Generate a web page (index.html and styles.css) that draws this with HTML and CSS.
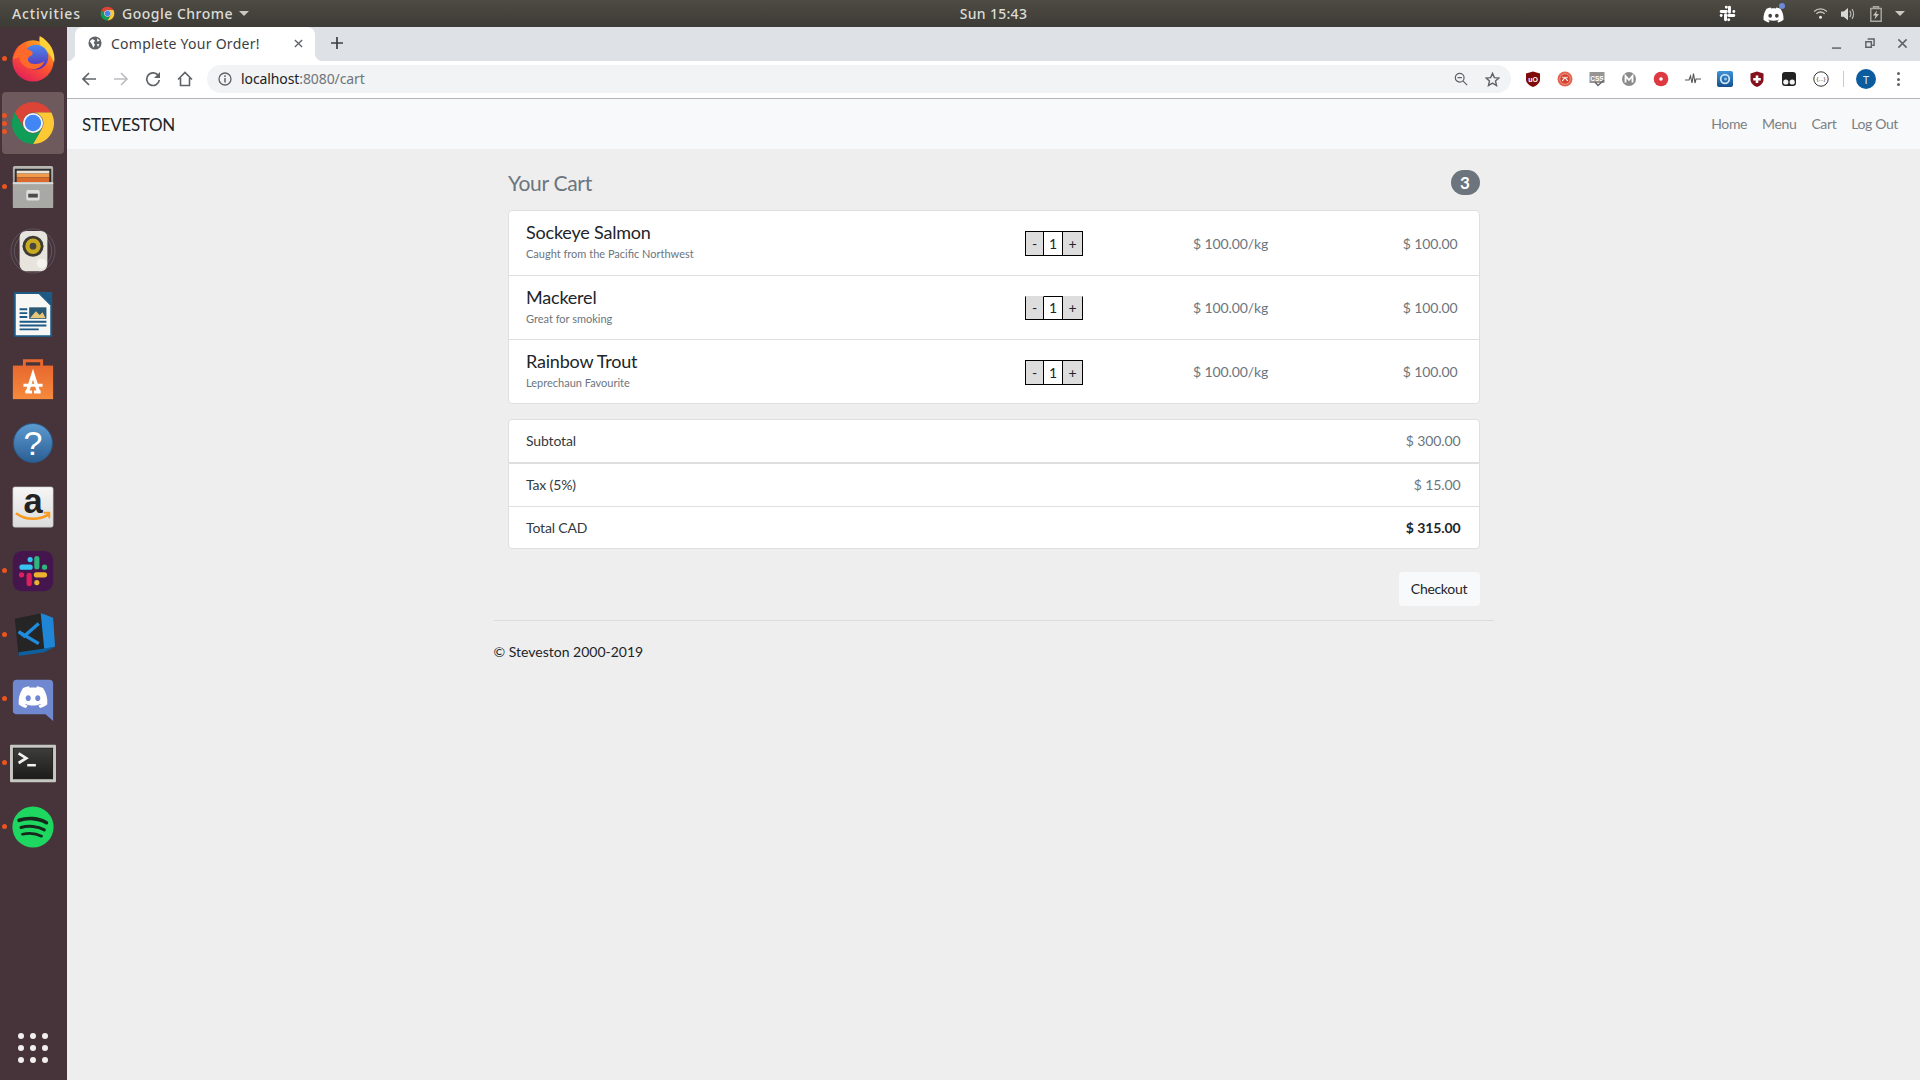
FILE: index.html
```html
<!DOCTYPE html>
<html lang="en">
<head>
<meta charset="utf-8">
<title>Complete Your Order!</title>
<link rel="stylesheet" href="styles.css">
</head>
<body>
<svg class="defs" width="0" height="0" aria-hidden="true">
  <defs>
    <symbol id="chrome" viewBox="0 0 48 48">
      <path fill="#db4437" d="M5 13A22 22 0 0 1 43 13H24A11 11 0 0 0 14.5 29.5Z"/>
      <path fill="#fcc934" d="M43 13A22 22 0 0 1 24 46L33.5 29.5A11 11 0 0 0 24 13Z"/>
      <path fill="#0f9d58" d="M24 46A22 22 0 0 1 5 13L14.5 29.5A11 11 0 0 0 33.5 29.5Z"/>
      <circle cx="24" cy="24" r="10.5" fill="#f1f3f4"/>
      <circle cx="24" cy="24" r="8.5" fill="#4285f4"/>
    </symbol>
    <symbol id="discord" viewBox="0 0 24 24">
      <path fill="currentColor" d="M20.317 4.3698a19.7913 19.7913 0 00-4.8851-1.5152.0741.0741 0 00-.0785.0371c-.211.3753-.4447.8648-.6083 1.2495-1.8447-.2762-3.68-.2762-5.4868 0-.1636-.3933-.4058-.8742-.6177-1.2495a.077.077 0 00-.0785-.037 19.7363 19.7363 0 00-4.8852 1.515.0699.0699 0 00-.0321.0277C.5334 9.0458-.319 13.5799.0992 18.0578a.0824.0824 0 00.0312.0561c2.0528 1.5076 4.0413 2.4228 5.9929 3.0294a.0777.0777 0 00.0842-.0276c.4616-.6304.8731-1.2952 1.226-1.9942a.076.076 0 00-.0416-.1057c-.6528-.2476-1.2743-.5495-1.8722-.8923a.077.077 0 01-.0076-.1277c.1258-.0943.2517-.1923.3718-.2914a.0743.0743 0 01.0776-.0105c3.9278 1.7933 8.18 1.7933 12.0614 0a.0739.0739 0 01.0785.0095c.1202.099.246.1981.3728.2924a.077.077 0 01-.0066.1276 12.2986 12.2986 0 01-1.873.8914.0766.0766 0 00-.0407.1067c.3604.698.7719 1.3628 1.225 1.9932a.076.076 0 00.0842.0286c1.961-.6067 3.9495-1.5219 6.0023-3.0294a.077.077 0 00.0313-.0552c.5004-5.177-.8382-9.6739-3.5485-13.6604a.061.061 0 00-.0312-.0286zM8.02 15.3312c-1.1825 0-2.1569-1.0857-2.1569-2.419 0-1.3332.9555-2.4189 2.157-2.4189 1.2108 0 2.1757 1.0952 2.1568 2.419 0 1.3332-.9555 2.4189-2.1569 2.4189zm7.9748 0c-1.1825 0-2.1569-1.0857-2.1569-2.419 0-1.3332.9554-2.4189 2.1569-2.4189 1.2108 0 2.1757 1.0952 2.1568 2.419 0 1.3332-.946 2.4189-2.1568 2.4189Z"/>
    </symbol>
    <linearGradient id="ffBody" x1="0.8" y1="0" x2="0.2" y2="1">
      <stop offset="0" stop-color="#ffb21c"/><stop offset="0.45" stop-color="#ff5a2c"/><stop offset="1" stop-color="#e01a5f"/>
    </linearGradient>
    <linearGradient id="ffCore" x1="0.5" y1="0" x2="0.5" y2="1">
      <stop offset="0" stop-color="#4a8af0"/><stop offset="1" stop-color="#5a2db0"/>
    </linearGradient>
    <linearGradient id="metal" x1="0" y1="0" x2="0" y2="1">
      <stop offset="0" stop-color="#b9b9b6"/><stop offset="1" stop-color="#777773"/>
    </linearGradient>
    <linearGradient id="storeBag" x1="0.5" y1="0" x2="0.5" y2="1">
      <stop offset="0" stop-color="#e8682f"/><stop offset="1" stop-color="#f58a3c"/>
    </linearGradient>
    <linearGradient id="amazonTile" x1="0.5" y1="0" x2="0.5" y2="1">
      <stop offset="0" stop-color="#f6f6f6"/><stop offset="1" stop-color="#dcdcdc"/>
    </linearGradient>
    <linearGradient id="extBlue" x1="0.5" y1="0" x2="0.5" y2="1">
      <stop offset="0" stop-color="#3d93d8"/><stop offset="1" stop-color="#14508c"/>
    </linearGradient>
    <linearGradient id="termScreen" x1="0.5" y1="0" x2="0.5" y2="1">
      <stop offset="0" stop-color="#3d3d3b"/><stop offset="1" stop-color="#1c1c1b"/>
    </linearGradient>
  </defs>
</svg>

<header class="topbar">
  <div class="topbar-left">
    <span class="activities">Activities</span>
    <span class="app-menu">
      <svg class="app-menu-icon"><use href="#chrome"/></svg>
      <span>Google Chrome</span>
      <span class="caret"></span>
    </span>
  </div>
  <div class="clock">Sun 15:43</div>
  <div class="tray">
    <svg class="tray-slack" viewBox="0 0 48 48" fill="none" stroke="#fff" stroke-width="7.5" stroke-linecap="round">
      <path d="M8 19H21M21 8V8.1M29 8V21M40 19V19.1M27 29H40M27 40V40.1M19 27V40M8 29V29.1"/>
    </svg>
    <span class="tray-discord">
      <svg class="tray-discord-icon"><use href="#discord"/></svg>
      <span class="tray-dot"></span>
    </span>
    <svg class="tray-wifi" viewBox="0 0 20 16" fill="none" stroke="#c8c8c4" stroke-width="1.7">
      <path d="M1.5 5.2C6.5 .8 13.5 .8 18.5 5.2M4.5 8.2C7.8 5.6 12.2 5.6 15.5 8.2"/>
      <circle cx="10" cy="13" r="2" fill="#e6e6e2" stroke="none"/>
    </svg>
    <svg class="tray-volume" viewBox="0 0 18 16" fill="none" stroke="#bdbdb8" stroke-width="1.3">
      <path fill="#d8d8d4" stroke="none" d="M1 5H4L9 1V15L4 11H1Z"/>
      <path d="M11 4.5C12.5 6.5 12.5 9.5 11 11.5M13.5 2.5C16 5.5 16 10.5 13.5 13.5"/>
    </svg>
    <svg class="tray-battery" viewBox="0 0 12 16">
      <path fill="none" stroke="#a9a9a4" stroke-width="1.4" d="M.8 2.5H11.2V15.2H.8ZM3.5 2.5V.8H8.5V2.5"/>
      <path fill="#c8c8c4" d="M7 4.5L3 9.5H5.5L4.5 13.5L9 8H6.3Z"/>
    </svg>
    <span class="caret tray-caret"></span>
  </div>
</header>

<div class="desktop">
  <nav class="dock">
    <div class="dock-item"><span class="run-dot"></span>
      <svg class="dock-icon" viewBox="0 0 48 48">
        <circle cx="24" cy="26" r="21.5" fill="url(#ffBody)"/>
        <path fill="#ffd23a" d="M31 0C42 6 48 17 46 28C43 20 38 15 33 12C31 9 30 4 31 0Z"/>
        <circle cx="27" cy="22" r="13" fill="url(#ffCore)"/>
        <path fill="#ff6a2a" d="M3 24C5 16 11 9 18 6C15 11 17 14 21 15C24 16 25 19 21 21C17 23 18 28 24 29C29 30 33 28 36 26C33 35 22 37 15 31C12 29 10 26 10 22C7 23 5 24 3 24Z"/>
      </svg>
    </div>
    <div class="dock-item dock-item-active">
      <span class="run-dots"><span class="run-dot-inline"></span><span class="run-dot-inline"></span><span class="run-dot-inline"></span></span>
      <svg class="dock-icon"><use href="#chrome"/></svg>
    </div>
    <div class="dock-item"><span class="run-dot"></span>
      <svg class="dock-icon" viewBox="0 0 48 48">
        <rect x="3" y="2" width="42" height="44" rx="2" fill="url(#metal)"/>
        <rect x="5" y="5" width="38" height="15" fill="#2f2f2e"/>
        <rect x="7" y="7" width="34" height="3" fill="#e8e4da"/>
        <rect x="7" y="10" width="34" height="4" fill="#f09a4a"/>
        <rect x="7" y="14" width="34" height="5" fill="#d96a2c"/>
        <rect x="3" y="19" width="42" height="27" rx="1" fill="#a8a8a5"/>
        <rect x="3" y="19" width="42" height="2" fill="#dcdcd9"/>
        <rect x="17" y="27" width="14" height="11" rx="2" fill="#dededb"/>
        <rect x="19" y="31" width="10" height="4" fill="#4c4c4a"/>
      </svg>
    </div>
    <div class="dock-item">
      <svg class="dock-icon" viewBox="0 0 48 48">
        <circle cx="24" cy="24" r="23" fill="none" stroke="#6f6a78" stroke-width="1" opacity=".6"/>
        <circle cx="24" cy="24" r="19.5" fill="none" stroke="#6f6a78" stroke-width="1" opacity=".7"/>
        <rect x="10" y="3" width="29" height="42" rx="7" fill="#e6e4dc"/>
        <circle cx="24" cy="19" r="11" fill="#3d3a33"/>
        <circle cx="24" cy="19" r="8" fill="#c9a91f"/>
        <circle cx="24" cy="19" r="3.5" fill="#4a4640"/>
        <circle cx="33" cy="37" r="5" fill="#f4f3ef"/>
      </svg>
    </div>
    <div class="dock-item">
      <svg class="dock-icon" viewBox="0 0 48 48">
        <path fill="#1d5a85" d="M4 0H33L44 11V45A2 2 0 0 1 42 47H6A2 2 0 0 1 4 45Z"/>
        <path fill="#f7f7f5" d="M6 2H30L42 14V45H6Z"/>
        <path fill="#1d5a85" d="M33 0H44V11Z"/>
        <path fill="#1d5a85" d="M10 17H18V19H10ZM10 21H18V23H10ZM10 25H18V27H10ZM10 30H38V32H10ZM10 34H38V36H10ZM10 38H30V40H10Z"/>
        <rect x="20" y="16" width="18" height="12" fill="#2a5a75"/>
        <path fill="#e6c777" d="M21 27L27 20L31 24L34 21L37 27Z"/>
      </svg>
    </div>
    <div class="dock-item">
      <svg class="dock-icon" viewBox="0 0 48 48">
        <path fill="none" stroke="#e8682f" stroke-width="3" d="M15 12V5H33V12"/>
        <rect x="3" y="10" width="42" height="35" fill="url(#storeBag)"/>
        <path fill="none" stroke="#fff" stroke-width="3.5" d="M18 38L24 19L30 38"/>
        <path fill="#fff" d="M14 29H34V32H14ZM16 36H23V39H16ZM25 36H32V39H25Z"/>
      </svg>
    </div>
    <div class="dock-item">
      <span class="help-ball">?</span>
    </div>
    <div class="dock-item">
      <svg class="dock-icon" viewBox="0 0 48 48">
        <rect x="3" y="3" width="42" height="42" rx="2" fill="url(#amazonTile)" stroke="#bbb" stroke-width=".6"/>
        <text class="amazon-mark" x="24" y="30" text-anchor="middle">a</text>
        <path fill="none" stroke="#f79a1e" stroke-width="2.6" stroke-linecap="round" d="M7 31C17 38 30 38 40 32"/>
        <path fill="none" stroke="#f79a1e" stroke-width="2" stroke-linecap="round" d="M36 30H41V35"/>
      </svg>
    </div>
    <div class="dock-item"><span class="run-dot"></span>
      <svg class="dock-icon" viewBox="0 0 48 48">
        <rect x="3" y="3" width="42" height="42" rx="9" fill="#45164e"/>
        <g fill="none" stroke-width="5.4" stroke-linecap="round">
          <path stroke="#36c5f0" d="M12.5 20H21M21 12V12.1"/>
          <path stroke="#2eb67d" d="M28 11V19.5M36 20H36.1"/>
          <path stroke="#ecb22e" d="M27.5 28H36M28 36V36.1"/>
          <path stroke="#e01e5a" d="M20 28.5V37M12 28H12.1"/>
        </g>
      </svg>
    </div>
    <div class="dock-item"><span class="run-dot"></span>
      <svg class="dock-icon" viewBox="0 0 48 48">
        <path fill="#252525" d="M5 7L34 1L39 40L9 46Z"/>
        <path fill="#1f86d6" d="M32 1L45 6L47 36L36 41Z"/>
        <path fill="#0e5f9e" d="M9 42L36 38L47 36L36 42L9 46Z"/>
        <path fill="none" stroke="#1e8bdc" stroke-width="3.6" d="M30 12L15 25L9 20.5L30 33"/>
      </svg>
    </div>
    <div class="dock-item"><span class="run-dot"></span>
      <svg class="dock-icon" viewBox="0 0 48 48">
        <path fill="#7088d0" d="M7 4H41A4 4 0 0 1 45 8V47L37 40H7A4 4 0 0 1 3 36V8A4 4 0 0 1 7 4Z"/>
        <svg class="dock-discord-glyph" x="8" y="7" width="32" height="30"><use href="#discord"/></svg>
      </svg>
    </div>
    <div class="dock-item"><span class="run-dot"></span>
      <svg class="dock-icon" viewBox="0 0 48 48">
        <rect x="0" y="5" width="48" height="39" rx="1" fill="#c6c6c3"/>
        <rect x="3.5" y="8.5" width="41" height="32" fill="url(#termScreen)" stroke="#111" stroke-width=".8"/>
        <path fill="none" stroke="#f2f2f2" stroke-width="2.8" d="M9 14L17 19L9 24"/>
        <rect x="18" y="25" width="9" height="2.6" fill="#f2f2f2"/>
      </svg>
    </div>
    <div class="dock-item"><span class="run-dot"></span>
      <svg class="dock-icon" viewBox="0 0 48 48">
        <circle cx="24" cy="24" r="21.5" fill="#1ed760"/>
        <path fill="none" stroke="#17271c" stroke-linecap="round" stroke-width="3.8" d="M9.5 17C18 14 30 14.5 38 19.5"/>
        <path fill="none" stroke="#17271c" stroke-linecap="round" stroke-width="3.2" d="M11.5 24.5C19 22.3 29 23 35.8 27"/>
        <path fill="none" stroke="#17271c" stroke-linecap="round" stroke-width="2.8" d="M13 31.5C20 30 27 30.5 33 33.6"/>
      </svg>
    </div>
    <div class="dock-item dock-apps">
      <span class="apps-grid">
        <i></i><i></i><i></i><i></i><i></i><i></i><i></i><i></i><i></i>
      </span>
    </div>
  </nav>

  <div class="browser">
    <div class="tabstrip">
      <div class="tab">
        <svg class="tab-globe" viewBox="0 0 16 16">
          <circle cx="8" cy="8" r="7.5" fill="#5f6368"/>
          <path fill="#fff" d="M2 6L5 3.5L8 5L6.5 8L8 10L6 13.5L4.5 9.5ZM10.5 2.5L13.5 5L10.5 6.5ZM10 9.5L13 9L11.5 12.5Z"/>
        </svg>
        <span class="tab-title">Complete Your Order!</span>
        <svg class="tab-close" viewBox="0 0 10 10" fill="none" stroke="#5f6368" stroke-width="1.5"><path d="M1 1L9 9M9 1L1 9"/></svg>
      </div>
      <svg class="new-tab" viewBox="0 0 12 12" fill="none" stroke="#3c4043" stroke-width="1.7"><path d="M6 0V12M0 6H12"/></svg>
      <div class="win-controls">
        <svg viewBox="0 0 12 12" fill="none" stroke="#5f6368" stroke-width="1.6"><path d="M1 11H11"/></svg>
        <svg viewBox="0 0 12 12" fill="none" stroke="#5f6368" stroke-width="1.6"><path d="M4 1H11V8H9M2 4H8V10H2Z"/></svg>
        <svg viewBox="0 0 12 12" fill="none" stroke="#5f6368" stroke-width="1.6"><path d="M1.5 1.5L10.5 10.5M10.5 1.5L1.5 10.5"/></svg>
      </div>
    </div>

    <div class="toolbar">
      <span class="tool-btn"><svg viewBox="0 0 16 16" fill="none" stroke="#5f6368" stroke-width="1.7"><path d="M15 8H2M8 2L2 8L8 14"/></svg></span>
      <span class="tool-btn"><svg viewBox="0 0 16 16" fill="none" stroke="#bcbec1" stroke-width="1.7"><path d="M1 8H14M8 2L14 8L8 14"/></svg></span>
      <span class="tool-btn"><svg viewBox="0 0 16 16" fill="none" stroke="#5f6368" stroke-width="1.7"><path d="M13.5 5A6.3 6.3 0 1 0 14.3 9"/><path fill="#5f6368" stroke="none" d="M15 1V7H9Z"/></svg></span>
      <span class="tool-btn"><svg viewBox="0 0 16 16" fill="none" stroke="#5f6368" stroke-width="1.6"><path d="M1 8.5L8 1.5L15 8.5M3.5 7V14.5H12.5V7"/></svg></span>
      <div class="omnibox">
        <svg class="omni-info" viewBox="0 0 14 14" fill="none" stroke="#5f6368" stroke-width="1.3">
          <circle cx="7" cy="7" r="6"/><path d="M7 6V10.5" stroke-width="1.5"/><path d="M7 3.3V5" stroke-width="1.5"/>
        </svg>
        <span class="omni-url"><span class="omni-host">localhost</span>:8080/cart</span>
        <svg class="omni-zoom" viewBox="0 0 16 16" fill="none" stroke="#5f6368" stroke-width="1.4"><circle cx="6.5" cy="6.5" r="5"/><path d="M10.2 10.2L15 15M4 6.5H9"/></svg>
        <svg class="omni-star" viewBox="0 0 16 16" fill="none" stroke="#5f6368" stroke-width="1.5"><path d="M8 1.5L10 6L14.8 6.4L11.2 9.6L12.3 14.4L8 11.8L3.7 14.4L4.8 9.6L1.2 6.4L6 6Z"/></svg>
      </div>
      <div class="extensions">
        <span class="ext"><svg viewBox="0 0 16 16"><path fill="#7f0a0a" d="M8 .5L15 2.5V9C15 12 11 15 8 16C5 15 1 12 1 9V2.5Z"/><text class="ext-label" x="8" y="10.5" text-anchor="middle">uO</text></svg></span>
        <span class="ext"><svg viewBox="0 0 16 16"><circle cx="8" cy="8" r="7.5" fill="#e2634f"/><circle cx="8" cy="8" r="5.2" fill="#d2422f" stroke="#f3b0a2" stroke-width=".7"/><path fill="none" stroke="#fff" stroke-width="1.2" d="M5.3 10L8 6.5L10.7 10M5.5 5.8L6.5 6.8M10.5 5.8L9.5 6.8"/></svg></span>
        <span class="ext"><svg viewBox="0 0 16 16"><rect x=".5" y="1" width="15" height="11" fill="#959595"/><text class="ext-label ext-css" x="8" y="9.5" text-anchor="middle">CSS</text><path fill="none" stroke="#666" stroke-width="1.5" d="M6 11L9 14.5L15 9"/></svg></span>
        <span class="ext"><svg viewBox="0 0 16 16"><circle cx="8" cy="8" r="7" fill="#8b8b8b"/><path fill="none" stroke="#fff" stroke-width="1.8" d="M4.5 11.5V5L8 9L11.5 5V11.5"/></svg></span>
        <span class="ext"><svg viewBox="0 0 16 16"><circle cx="8" cy="8" r="7.3" fill="#dc3a40"/><circle cx="8" cy="8" r="1.8" fill="#fff"/></svg></span>
        <span class="ext"><svg viewBox="0 0 16 16" fill="none" stroke="#555" stroke-width="1.1"><path d="M0 9H4L5.5 5L7 12L8.5 2.5L10 12L11 8H16"/></svg></span>
        <span class="ext"><svg viewBox="0 0 16 16"><rect width="16" height="16" rx="2" fill="url(#extBlue)"/><circle cx="8" cy="8" r="4.3" fill="none" stroke="#cfe3f5" stroke-width="1.8"/><circle cx="8.5" cy="8" r="1.5" fill="#8fc2ea"/></svg></span>
        <span class="ext"><svg viewBox="0 0 16 16"><path fill="#860f1c" d="M8 .5L14.5 2.5V9C14.5 12 11 15 8 16C5 15 1.5 12 1.5 9V2.5Z"/><path fill="#fff" d="M6.7 4.5H9.3V7H11.8V9.5H9.3V12H6.7V9.5H4.2V7H6.7Z"/></svg></span>
        <span class="ext"><svg viewBox="0 0 16 16"><rect x="1" y="1" width="14" height="14" rx="3" fill="#222"/><circle cx="4.8" cy="11" r="2.6" fill="#f4f4f4"/><circle cx="11.2" cy="11" r="2.6" fill="#f4f4f4"/></svg></span>
        <span class="ext"><svg viewBox="0 0 16 16"><circle cx="8" cy="8" r="7.2" fill="none" stroke="#333" stroke-width="1"/><text class="ext-label ext-braces" x="8" y="10.2" text-anchor="middle">{...}</text></svg></span>
      </div>
      <span class="tool-sep"></span>
      <span class="tool-btn"><span class="avatar">T</span></span>
      <span class="tool-btn"><span class="kebab"><i></i><i></i><i></i></span></span>
    </div>

    <div class="navbar">
      <a class="brand">STEVESTON</a>
      <ul class="nav-links">
        <li>Home</li>
        <li>Menu</li>
        <li>Cart</li>
        <li>Log Out</li>
      </ul>
    </div>

    <main class="page">
      <div class="container">
        <div class="content">
          <div class="cart-head">
            <h1 class="cart-title">Your Cart</h1>
            <span class="badge">3</span>
          </div>

          <section class="card">
            <div class="item">
              <div class="item-info">
                <div class="item-name">Sockeye Salmon</div>
                <div class="item-desc">Caught from the Pacific Northwest</div>
              </div>
              <div class="qty">
                <span class="qty-btn qty-minus">-</span><span class="qty-val">1</span><span class="qty-btn qty-plus">+</span>
              </div>
              <div class="item-price">$ 100.00/kg</div>
              <div class="item-total">$ 100.00</div>
            </div>
            <div class="item">
              <div class="item-info">
                <div class="item-name">Mackerel</div>
                <div class="item-desc">Great for smoking</div>
              </div>
              <div class="qty qty-open">
                <span class="qty-btn qty-minus">-</span><span class="qty-val">1</span><span class="qty-btn qty-plus">+</span>
              </div>
              <div class="item-price">$ 100.00/kg</div>
              <div class="item-total">$ 100.00</div>
            </div>
            <div class="item">
              <div class="item-info">
                <div class="item-name">Rainbow Trout</div>
                <div class="item-desc">Leprechaun Favourite</div>
              </div>
              <div class="qty">
                <span class="qty-btn qty-minus">-</span><span class="qty-val">1</span><span class="qty-btn qty-plus">+</span>
              </div>
              <div class="item-price">$ 100.00/kg</div>
              <div class="item-total">$ 100.00</div>
            </div>
          </section>

          <section class="card summary">
            <div class="sum-row sum-first"><span class="sum-label">Subtotal</span><span class="sum-value">$ 300.00</span></div>
            <div class="sum-row sum-second"><span class="sum-label">Tax (5%)</span><span class="sum-value">$ 15.00</span></div>
            <div class="sum-row"><span class="sum-label">Total CAD</span><span class="sum-value sum-strong">$ 315.00</span></div>
          </section>

          <div class="actions"><button class="checkout" type="button">Checkout</button></div>
        </div>
        <hr class="rule">
        <footer class="footer">© Steveston 2000-2019</footer>
      </div>
    </main>
  </div>
</div>
</body>
</html>
```

FILE: styles.css
```css
* { box-sizing: border-box; }
html, body { margin: 0; height: 100%; }
body {
  width: 1920px;
  height: 1080px;
  overflow: hidden;
  display: flex;
  flex-direction: column;
  font-family: "Lato", "Liberation Sans", sans-serif;
  background: #eee;
  color: #212529;
}
.defs { position: absolute; }

/* Top bar */
.topbar {
  height: 27px;
  flex: none;
  display: grid;
  grid-template-columns: 1fr auto 1fr;
  align-items: center;
  background: linear-gradient(#4e4b44, #3d3b36);
  color: #dcdcd6;
  font-family: "Noto Sans", sans-serif;
  font-size: 14px;
  font-weight: 500;
}
.topbar-left { display: flex; align-items: center; padding-left: 12px; }
.activities { width: 88px; letter-spacing: .85px; }
.app-menu { display: flex; align-items: center; letter-spacing: .5px; }
.app-menu-icon { width: 15px; height: 15px; margin-right: 7px; }
.caret {
  width: 0;
  height: 0;
  border-left: 5px solid transparent;
  border-right: 5px solid transparent;
  border-top: 5px solid #c8c8c4;
  margin-left: 6px;
}
.clock { margin-left: 67px; letter-spacing: .3px; }
.tray { display: flex; align-items: center; justify-content: flex-end; padding-right: 15px; }
.tray-slack { width: 19px; height: 19px; margin-right: 26px; }
.tray-discord { display: block; position: relative; width: 21px; height: 18px; margin-right: 29px; color: #fff; }
.tray-discord-icon { display: block; width: 21px; height: 20px; }
.tray-dot {
  position: absolute;
  top: -2px;
  right: -1px;
  width: 6px;
  height: 6px;
  border-radius: 50%;
  background: #6d8ad8;
}
.tray-wifi { width: 15px; height: 13px; margin-right: 12px; }
.tray-volume { width: 16px; height: 14px; margin-right: 14px; }
.tray-battery { width: 12px; height: 16px; }
.tray-caret { margin-left: 13px; }

/* Desktop */
.desktop { flex: 1; display: flex; min-height: 0; }
.dock {
  width: 67px;
  flex: none;
  display: flex;
  flex-direction: column;
  padding-right: 1px;
  background: #46343a;
}
.dock-item {
  position: relative;
  height: 64px;
  flex: none;
  display: flex;
  align-items: center;
  justify-content: center;
}
.dock-icon { width: 46px; height: 46px; }
.dock-item-active::before {
  content: "";
  position: absolute;
  left: 2px;
  right: 2px;
  top: 1px;
  bottom: 1px;
  border-radius: 4px;
  background: #6e5a5c;
}
.dock-item-active .dock-icon { position: relative; width: 46px; height: 46px; }
.run-dot {
  position: absolute;
  left: 2px;
  top: 29px;
  width: 5px;
  height: 5px;
  border-radius: 50%;
  background: #e95420;
}
.run-dots {
  position: absolute;
  left: 2px;
  top: 22px;
  display: flex;
  flex-direction: column;
  gap: 3px;
  z-index: 1;
}
.run-dot-inline { width: 5px; height: 5px; border-radius: 50%; background: #e95420; }
.dock-discord-glyph { color: #fff; }
.help-ball {
  width: 40px;
  height: 40px;
  border-radius: 50%;
  display: flex;
  align-items: center;
  justify-content: center;
  background: linear-gradient(#5c9ad0, #2b5f94);
  border: 1px solid #2a5a8c;
  color: #fff;
  font: 400 34px/38px "Liberation Sans", sans-serif;
}
.amazon-mark { font: 700 36px "Liberation Sans", sans-serif; fill: #222; }
.dock-apps { margin-top: auto; }
.apps-grid { display: grid; grid-template-columns: repeat(3, 6px); gap: 6px; }
.apps-grid i { width: 6px; height: 6px; border-radius: 50%; background: #f2f0ef; }

/* Browser */
.browser { flex: 1; min-width: 0; display: flex; flex-direction: column; }
.tabstrip {
  height: 34px;
  flex: none;
  display: flex;
  align-items: stretch;
  background: #dee1e6;
  padding-left: 8px;
}
.tab {
  position: relative;
  width: 240px;
  display: flex;
  align-items: center;
  padding: 0 12px 2px 13px;
  background: #fff;
  border-radius: 8px 8px 0 0;
}
.tab::before, .tab::after {
  content: "";
  position: absolute;
  bottom: 0;
  width: 8px;
  height: 8px;
}
.tab::before { left: -8px; background: radial-gradient(circle at 0 0, transparent 8px, #fff 8.5px); }
.tab::after { right: -8px; background: radial-gradient(circle at 100% 0, transparent 8px, #fff 8.5px); }
.tab-globe { width: 14px; height: 14px; flex: none; margin-right: 9px; }
.tab-title {
  flex: 1;
  font-family: "Noto Sans", sans-serif;
  font-size: 14px;
  color: #3c4043;
  letter-spacing: .27px;
}
.tab-close { width: 9px; height: 9px; flex: none; }
.new-tab { width: 12px; height: 12px; align-self: center; margin: 0 0 2px 16px; }
.win-controls { display: flex; align-items: center; gap: 22px; margin-left: auto; padding: 0 12px 2px 0; }
.win-controls svg { width: 11px; height: 11px; }

.toolbar {
  height: 38px;
  flex: none;
  display: flex;
  align-items: center;
  padding: 0 6px 1px;
  background: #fff;
  border-bottom: 1px solid #b5b5b7;
}
.tool-btn { width: 32px; height: 32px; flex: none; display: flex; align-items: center; justify-content: center; }
.tool-btn svg { width: 16px; height: 16px; }
.omnibox {
  flex: 1;
  height: 28px;
  margin: 0 6px;
  display: flex;
  align-items: center;
  padding: 0 11px;
  background: #f1f3f4;
  border-radius: 14px;
}
.omni-info { width: 14px; height: 14px; margin-right: 9px; flex: none; }
.omni-url { flex: 1; padding-bottom: 1px; font-family: "Noto Sans", sans-serif; font-size: 14px; letter-spacing: -.1px; color: #70757a; }
.omni-host { color: #202124; }
.omni-zoom { width: 14px; height: 14px; margin-right: 17px; }
.omni-star { width: 15px; height: 15px; }
.extensions { display: flex; }
.ext { width: 32px; height: 32px; display: flex; align-items: center; justify-content: center; }
.ext svg { width: 16px; height: 16px; }
.ext-label { font: 700 7px "Liberation Sans", sans-serif; fill: #fff; }
.ext-css { font-size: 6.5px; }
.ext-braces { font-size: 6px; font-weight: 400; fill: #333; }
.tool-sep { width: 1px; height: 16px; margin: 0 6px; background: #c9cbce; flex: none; }
.avatar {
  width: 20px;
  height: 20px;
  border-radius: 50%;
  display: flex;
  align-items: center;
  justify-content: center;
  background: #0b5c9e;
  color: #dce9f4;
  font: 400 11px "Noto Sans", sans-serif;
}
.kebab { display: flex; flex-direction: column; gap: 2.5px; }
.kebab i { width: 3px; height: 3px; border-radius: 50%; background: #5f6368; }

/* Site navbar */
.navbar {
  height: 50px;
  flex: none;
  display: flex;
  align-items: center;
  justify-content: space-between;
  padding: 0 22px 0 15px;
  background: #f8f9fa;
}
.brand { font-size: 17px; letter-spacing: -.3px; color: #212529; }
.nav-links { list-style: none; margin: 0; padding: 0 0 1px; display: flex; gap: 15px; font-size: 14px; letter-spacing: -.38px; color: #7b8085; }

/* Page */
.page { flex: 1; background: #eee; min-height: 0; }
.container { width: 1000px; margin: 0 auto; }
.content { padding: 0 14px 0 14.5px; }
.cart-head {
  height: 61px;
  display: flex;
  align-items: center;
  justify-content: space-between;
  padding-top: 6px;
}
.cart-title { margin: 0; font-size: 21px; font-weight: 400; letter-spacing: -.3px; color: #6c757d; }
.badge {
  width: 29px;
  height: 25px;
  border-radius: 13px;
  display: flex;
  align-items: center;
  justify-content: center;
  background: #6c757d;
  color: #fff;
  font-size: 17px;
  font-weight: 700;
}
.card { background: #fff; border: 1px solid #dfdfdf; border-radius: 4px; }
.item {
  height: 64px;
  display: grid;
  grid-template-columns: 499px 168px 1fr auto;
  align-items: center;
  padding: 0 21px 0 17px;
  border-top: 1px solid #dfdfdf;
}
.item:first-child { border-top: 0; }
.item-info { padding-bottom: 2px; }
.item:first-child .item-info { padding-bottom: 3px; }
.item-name { font-size: 18px; line-height: 23px; letter-spacing: -.2px; color: #212529; }
.item-desc { font-size: 11px; line-height: 16px; margin-top: 2px; color: #6c757d; }
.qty { display: flex; width: 58px; height: 25px; margin-top: 1px; font-size: 14px; color: #212529; }
.qty-open { margin-top: 0; height: 24px; }
.qty-btn, .qty-val {
  display: flex;
  align-items: center;
  justify-content: center;
  border: 1px solid #000;
  border-left-width: 0;
}
.qty-btn { background: #ddd; }
.qty-minus { width: 19px; border-left-width: 1px; }
.qty-val { width: 19px; background: #fff; }
.qty-plus { width: 20px; }
.qty-open .qty-btn { border-top-color: transparent; }
.item-price, .item-total { font-size: 14px; letter-spacing: -.1px; color: #6c757d; }
.summary { margin-top: 15px; }
.sum-row {
  height: 42px;
  display: flex;
  align-items: center;
  justify-content: space-between;
  padding: 0 18px 0 17px;
  border-top: 1px solid #dfdfdf;
  font-size: 14px;
}
.sum-first { border-top: 0; padding-bottom: 1px; }
.sum-second { height: 44px; border-top-width: 2px; padding-bottom: 2px; }
.sum-label { letter-spacing: -.15px; color: #343a40; }
.sum-value { letter-spacing: -.1px; color: #6c757d; }
.sum-strong { color: #212529; font-weight: 700; }
.actions { display: flex; justify-content: flex-end; margin-top: 23px; }
.checkout {
  width: 81px;
  height: 34px;
  padding: 0 0 2px;
  border: 0;
  border-radius: 4px;
  background: #f8f9fa;
  color: #212529;
  font: 400 14px "Lato", sans-serif;
  letter-spacing: -.3px;
}
.rule { height: 1px; margin: 14px 0 0; border: 0; background: #dcdcdc; }
.footer { margin-top: 22px; font-size: 14px; color: #212529; }
```
